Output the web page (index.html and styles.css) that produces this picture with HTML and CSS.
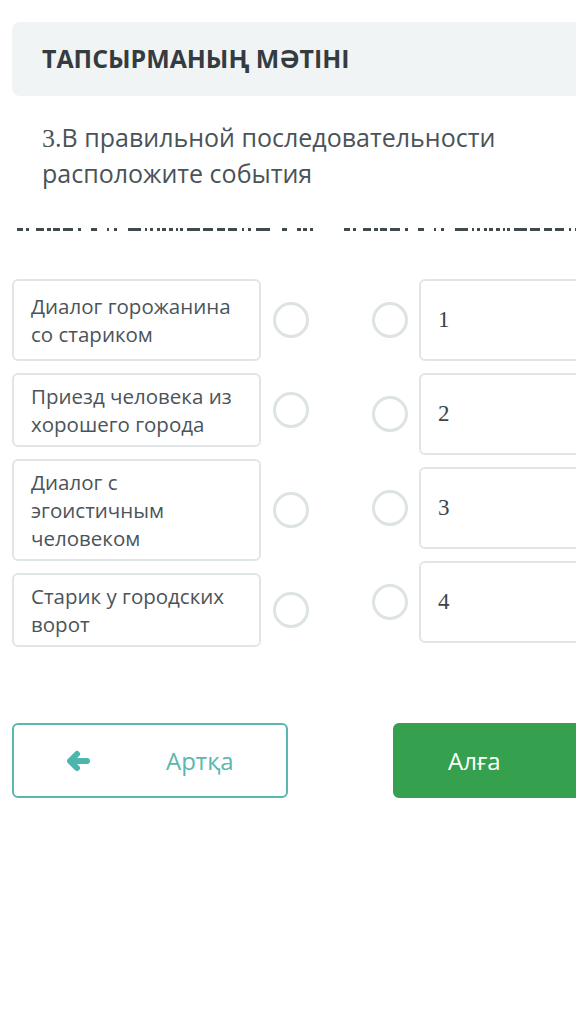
FILE: index.html
```html
<!DOCTYPE html>
<html lang="ru">
<head>
<meta charset="utf-8">
<title>Тапсырма</title>
<link rel="stylesheet" href="styles.css">
</head>
<body>
<div class="page">
  <div class="task-head">ТАПСЫРМАНЫҢ МӘТІНІ</div>
  <div class="question"><span class="num">3</span>.В правильной последовательности расположите события</div>
  <svg class="dashes" width="660" height="4" viewBox="0 0 660 4">
    <g id="dp" fill="#3f4a4e">
      <rect x="17" y="0" width="6" height="3"/>
      <rect x="26" y="0" width="3" height="3"/>
      <rect x="36" y="0" width="8" height="3"/>
      <rect x="47" y="0" width="4" height="3"/>
      <rect x="53" y="0" width="7" height="3"/>
      <rect x="63" y="0" width="10" height="3"/>
      <rect x="78" y="0" width="3" height="3"/>
      <rect x="91" y="0" width="6" height="3"/>
      <rect x="107" y="0" width="2" height="3"/>
      <rect x="114" y="0" width="3" height="3"/>
      <rect x="128" y="0" width="13" height="3"/>
      <rect x="145" y="0" width="2" height="3"/>
      <rect x="150" y="0" width="3" height="3"/>
      <rect x="157" y="0" width="3" height="3"/>
      <rect x="162" y="0" width="4" height="3"/>
      <rect x="169" y="0" width="4" height="3"/>
      <rect x="176" y="0" width="2" height="3"/>
      <rect x="180" y="0" width="3" height="3"/>
      <rect x="187" y="0" width="13" height="3"/>
      <rect x="203" y="0" width="10" height="3"/>
      <rect x="217" y="0" width="8" height="3"/>
      <rect x="228" y="0" width="9" height="3"/>
      <rect x="242" y="0" width="2" height="3"/>
      <rect x="248" y="0" width="3" height="3"/>
      <rect x="256" y="0" width="14" height="3"/>
      <rect x="282" y="0" width="5" height="3"/>
      <rect x="297" y="0" width="4" height="3"/>
      <rect x="303" y="0" width="4" height="3"/>
      <rect x="310" y="0" width="3" height="3"/>
    </g>
    <use href="#dp" x="327"/>
  </svg>

  <div class="match">
    <div class="col">
      <div class="row">
        <div class="item item-tall">Диалог горожанина со стариком</div>
        <span class="radio"></span>
      </div>
      <div class="row">
        <div class="item">Приезд человека из хорошего города</div>
        <span class="radio"></span>
      </div>
      <div class="row">
        <div class="item">Диалог с эгоистичным человеком</div>
        <span class="radio"></span>
      </div>
      <div class="row">
        <div class="item">Старик у городских ворот</div>
        <span class="radio"></span>
      </div>
    </div>
    <div class="col col-right">
      <div class="row">
        <span class="radio"></span>
        <div class="item item-num">1</div>
      </div>
      <div class="row">
        <span class="radio"></span>
        <div class="item item-num">2</div>
      </div>
      <div class="row">
        <span class="radio"></span>
        <div class="item item-num">3</div>
      </div>
      <div class="row">
        <span class="radio"></span>
        <div class="item item-num">4</div>
      </div>
    </div>
  </div>

  <div class="nav">
    <button class="btn btn-back">
      <svg class="arrow" width="26" height="22" viewBox="0 0 26 22">
        <path d="M22 11 H6 M12 4 L5 11 L12 18" fill="none" stroke="#4cb5ac" stroke-width="6" stroke-linecap="round" stroke-linejoin="round"/>
      </svg>
      <span>Артқа</span>
    </button>
    <button class="btn btn-next"><span>Алға</span></button>
  </div>
</div>
</body>
</html>
```
FILE: styles.css
```css
html, body {
  margin: 0;
  padding: 0;
  background: #ffffff;
  overflow: hidden;
}
body {
  width: 576px;
  height: 1028px;
  font-family: "Open Sans", "Noto Sans", sans-serif;
  color: #4b5459;
}
.page {
  width: 657px;
  margin-left: 12px;
  padding-top: 22px;
}
.task-head {
  height: 74px;
  box-sizing: border-box;
  background: #f1f4f5;
  border-radius: 8px;
  padding-left: 30px;
  padding-bottom: 2px;
  display: flex;
  align-items: center;
  font-weight: 700;
  font-size: 24.9px;
  color: #353c41;
}
.question {
  padding: 24px 0 0 30px;
  font-size: 25px;
  line-height: 34px;
  color: #4a5358;
  width: 520px;
}
.num {
  font-family: "Liberation Serif", "DejaVu Serif", serif;
  font-size: 26px;
}
.dashes {
  display: block;
  margin: 38px 0 0 -12px;
}
.match {
  margin-top: 47px;
  display: flex;
  gap: 63px;
}
.col {
  display: flex;
  flex-direction: column;
  gap: 12px;
}
.row {
  display: flex;
  align-items: center;
  gap: 12px;
}
.col-right .row {
  gap: 11px;
}
.item {
  width: 249px;
  box-sizing: border-box;
  border: 2px solid #e0e6e7;
  border-radius: 6px;
  padding: 7px 14px 7px 17px;
  font-size: 20.5px;
  line-height: 28px;
  color: #4b5459;
  background: #fff;
}
.item-tall {
  min-height: 82px;
  display: flex;
  align-items: center;
}
.item-num {
  height: 82px;
  display: flex;
  align-items: center;
  padding-left: 17px;
  font-family: "Liberation Serif", "DejaVu Serif", serif;
  font-size: 23px;
  color: #3c4448;
}
.radio {
  flex: none;
  width: 36px;
  height: 36px;
  box-sizing: border-box;
  border: 3px solid #dde3e5;
  border-radius: 50%;
}
.nav {
  margin-top: 76px;
  display: flex;
  gap: 105px;
}
.btn {
  width: 276px;
  height: 75px;
  box-sizing: border-box;
  border-radius: 6px;
  font-family: "Open Sans", "Noto Sans", sans-serif;
  font-size: 24px;
  display: flex;
  align-items: center;
  cursor: pointer;
}
.btn-back {
  background: #fff;
  border: 2px solid #5bb7ae;
  color: #5bb7ae;
  padding-left: 51px;
  gap: 75px;
}
.arrow {
  display: block;
}
.btn-next {
  background: #35a14f;
  border: 2px solid #35a14f;
  color: #ffffff;
  padding-left: 53px;
}
```
